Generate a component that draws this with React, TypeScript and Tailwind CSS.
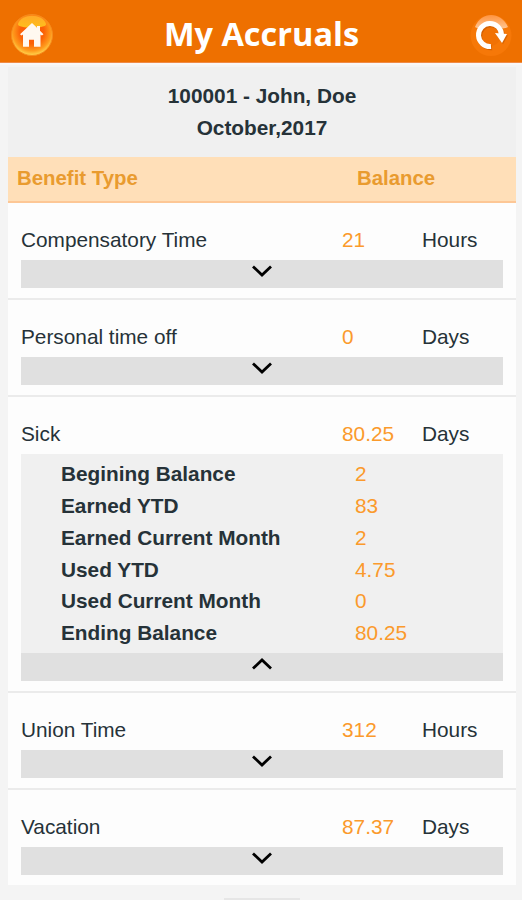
import { useState } from 'react';

const accruals = [
  { type: 'Compensatory Time', balance: '21', unit: 'Hours', details: [], height: 'h-[97px]' },
  { type: 'Personal time off', balance: '0', unit: 'Days', details: [], height: 'h-[97px]' },
  { type: 'Sick', balance: '80.25', unit: 'Days', height: 'h-[296px]', details: [
    { label: 'Begining Balance', value: '2' },
    { label: 'Earned YTD', value: '83' },
    { label: 'Earned Current Month', value: '2' },
    { label: 'Used YTD', value: '4.75' },
    { label: 'Used Current Month', value: '0' },
    { label: 'Ending Balance', value: '80.25' },
  ]},
  { type: 'Union Time', balance: '312', unit: 'Hours', details: [], height: 'h-[97px]' },
  { type: 'Vacation', balance: '87.37', unit: 'Days', details: [], height: 'h-[95px]' },
];

function HomeIcon() {
  return (
    <svg viewBox="0 0 44 44" className="h-11 w-11">
      <defs>
        <radialGradient id="homeFill" cx="50%" cy="42%" r="58%">
          <stop offset="0" stopColor="#ff5208" />
          <stop offset="0.5" stopColor="#fb6206" />
          <stop offset="0.8" stopColor="#ff9a1c" />
          <stop offset="1" stopColor="#ffd850" />
        </radialGradient>
        <linearGradient id="homeGloss" x1="0" y1="0" x2="0" y2="1">
          <stop offset="0" stopColor="#ffa928" />
          <stop offset="1" stopColor="#ffc81e" stopOpacity="0.9" />
        </linearGradient>
      </defs>
      <circle cx="22" cy="22" r="20.5" fill="url(#homeFill)" stroke="#f68b1c" strokeWidth="1" />
      <path d="M8 11C11 0 33 0 36 11C37 16 7 16 8 11Z" fill="url(#homeGloss)" />
      <path d="M22 10l5 4.7v-1.7h3v4.7l3.5 3.5-1.6 1.4-1.4-1.2v12.300h-6.500v-7h-5v7h-6V21.4l-1.4 1.200-1.600-1.400z" fill="#fff8f0" />
    </svg>
  );
}

function RefreshIcon() {
  return (
    <svg viewBox="0 0 44 44" className="h-11 w-11">
      <defs>
        <linearGradient id="refreshGloss" x1="0" y1="0" x2="0" y2="1">
          <stop offset="0" stopColor="#ff9440" />
          <stop offset="1" stopColor="#ffc795" />
        </linearGradient>
      </defs>
      <circle cx="22" cy="22.5" r="20.5" fill="#f67808" />
      <path d="M6 14C12 -2 32 -2 39 14C35 17 9 17 6 14Z" fill="url(#refreshGloss)" />
      <circle cx="21" cy="22" r="11" fill="#f17205" />
      <g transform="translate(1 1.2)" opacity="0.5">
        <path d="M22 33.5A11.5 11.5 0 1 1 32.5 22" fill="none" stroke="#b85000" strokeWidth="5" />
        <path d="M26 20l12 1-5 9z" fill="#b85000" />
      </g>
      <path d="M22 33.5A11.5 11.5 0 1 1 32.5 22" fill="none" stroke="#fff" strokeWidth="5" />
      <path d="M26 20l12 1-5 9z" fill="#fff" />
    </svg>
  );
}

function Chevron({ up }: { up: boolean }) {
  return (
    <svg viewBox="0 0 20 12" className="h-3 w-5" fill="none" stroke="#000" strokeWidth="2.8">
      <path d={up ? 'M1 10.5L10 2L19 10.5' : 'M1 1.5L10 10L19 1.5'} />
    </svg>
  );
}

export default function App() {
  const [open, setOpen] = useState('Sick');

  return (
    <div className="flex h-[900px] w-[522px] flex-col overflow-hidden bg-[#f4f4f4] font-['Liberation_Sans',Arial,sans-serif] text-[20.8px] text-[#263238]">
      <header className="flex h-[63px] shrink-0 items-center justify-between border-b border-[#f08a45] bg-[#ee7000] pl-[10px] pr-[9px] pt-2">
        <button><HomeIcon /></button>
        <h1 className="pb-[2px] font-['Open_Sans','Noto_Sans',sans-serif] text-[32.5px] font-bold text-white">My Accruals</h1>
        <button><RefreshIcon /></button>
      </header>

      <main className="border-t-2 border-[#f9f7f7] pl-2 pr-[6px] pt-[2px]">
        <div className="h-[90px] bg-[#f0f0f0] pt-[13px] text-center font-bold leading-8">
          <p>100001 - John, Doe</p>
          <p>October,2017</p>
        </div>

        <div className="flex h-[46px] items-center border-b-2 border-[#fdc796] bg-[#ffdfb8] pb-[2px] pl-[9px] text-[20.4px] font-bold text-[#e99b2f]">
          <span className="w-[340px]">Benefit Type</span>
          <span>Balance</span>
        </div>

        {accruals.map((item) => {
          const expanded = open === item.type;
          return (
            <section
              key={item.type}
              className={`border-b-2 border-[#ebebeb] bg-[#fdfdfd] px-[13px] pt-[21px] last:border-b-0 ${item.height}`}
            >
              <div className="flex h-9 leading-8">
                <span className="w-[321px]">{item.type}</span>
                <span className="w-[80px] text-[#fb9a2c]">{item.balance}</span>
                <span>{item.unit}</span>
              </div>
              {expanded && (
                <ul className="h-[199px] bg-[#f0f0f0] pl-10 pt-1">
                  {item.details.map((row) => (
                    <li key={row.label} className="flex h-[31.8px] items-center">
                      <span className="w-[294px] font-bold">{row.label}</span>
                      <span className="text-[#fb9a2c]">{row.value}</span>
                    </li>
                  ))}
                </ul>
              )}
              <button
                onClick={() => setOpen(expanded ? '' : item.type)}
                className="flex h-7 w-full items-start justify-center bg-[#e0e0e0] pt-[5px]"
              >
                <Chevron up={expanded} />
              </button>
            </section>
          );
        })}
      </main>

      <div className="mt-auto ml-[224px] h-[2px] w-[76px] bg-[#e6e6e6]" />
    </div>
  );
}
